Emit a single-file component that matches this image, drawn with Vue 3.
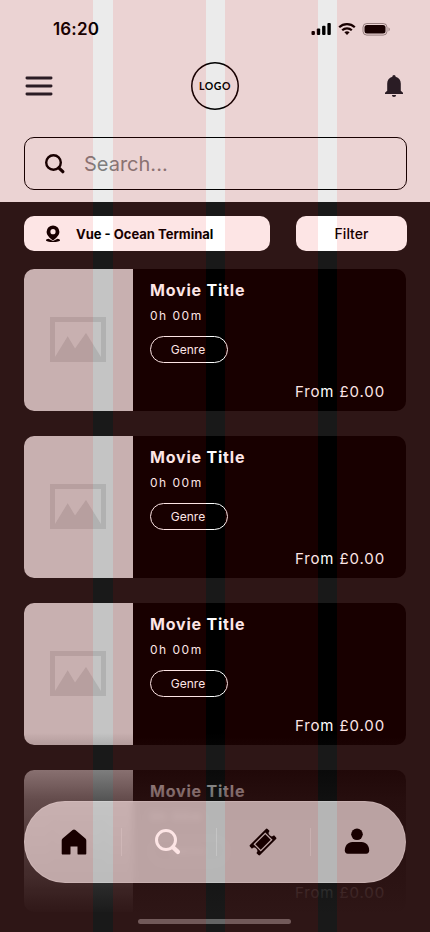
<script setup>
const movies = [1, 2, 3, 4]
</script>

<template>
  <div class="screen">
    <header class="top">
      <div class="status">
        <span class="time">16:20</span>
        <svg class="sys" width="80" height="16" viewBox="0 0 80 16">
          <g fill="#000">
            <rect x="0.5" y="9" width="3.4" height="4" rx="1" />
            <rect x="5.8" y="6.5" width="3.4" height="6.5" rx="1" />
            <rect x="11.1" y="3.7" width="3.4" height="9.3" rx="1" />
            <rect x="16.4" y="1" width="3.4" height="12" rx="1" />
          </g>
          <g fill="none" stroke="#000" stroke-width="2.2">
            <path d="M28.2 5.3a11.3 11.3 0 0 1 15.6 0" />
            <path d="M31.2 8.3a7 7 0 0 1 9.6 0" />
          </g>
          <path d="M33.4 10.3a4 4 0 0 1 5.2 0L36 13z" />
          <rect x="52" y="1.5" width="24" height="11.6" rx="3.8" fill="none" stroke="#000" stroke-opacity=".4" />
          <rect x="53.500" y="3" width="21" height="8.600" rx="2.500" />
          <path d="M77.500 5.300v4.200c1.800-.8 1.800-3.400 0-4.200z" fill-opacity=".4" />
        </svg>
      </div>
      <div class="bar">
        <svg width="28" height="20" viewBox="0 0 28 20" stroke="#152029" stroke-width="2.800" stroke-linecap="round">
          <path d="M1.900 2h24.200M1.900 10h24.200M1.900 18h24.200" />
        </svg>
        <div class="logo">LOGO</div>
        <svg class="bell" width="18" height="23" viewBox="0 0 18 23" fill="#152029">
          <path d="M9 0c1 0 1.600.7 1.600 1.800 3.400.8 5.200 3.500 5.200 6.800v7.200l2.200 2V19H0v-1.200l2.200-2V8.600c0-3.300 1.800-6 5.200-6.800C7.400.7 8 0 9 0zM6.900 20h4.200a2.100 2.100 0 0 1-4.200 0z" />
        </svg>
      </div>
      <div class="search">
        <svg width="20" height="20" viewBox="0 0 20 20" fill="none" stroke="#000">
          <circle cx="8.500" cy="8.500" r="7.300" stroke-width="2.400" />
          <path d="M13.800 13.800l4 3.900" stroke-width="3.200" stroke-linecap="round" />
        </svg>
        <span>Search...</span>
      </div>
    </header>
    <main>
      <div class="tools">
        <button class="place">
          <svg width="16" height="18" viewBox="0 0 16 18">
            <path d="M8 .5a6.400 6.400 0 0 0-6.400 6.300C1.600 10.300 4.400 12.700 8 15.500c3.600-2.800 6.400-5.200 6.400-8.700A6.400 6.400 0 0 0 8 .5zm0 3.600a2.600 2.600 0 1 1 0 5.200 2.600 2.600 0 0 1 0-5.200z" fill-rule="evenodd" />
            <path d="M3.600 13.800C2 14.100 1 14.600 1 15.200c0 1.100 3 1.800 7 1.800s7-.7 7-1.800c0-.6-1-1.100-2.600-1.400L8 16z" />
          </svg>
          <span>Vue - Ocean Terminal</span>
        </button>
        <button class="filter">Filter</button>
      </div>
      <section class="list">
        <article v-for="m in movies" :key="m" class="card">
          <div class="poster">
            <svg width="56" height="45" viewBox="0 0 56 45">
              <path d="M0 0h56v45H0zM5 5v35l12.700-20.800L25 31.500 36 16l15 24V5z" fill="#b1b1b1" fill-rule="evenodd" />
            </svg>
          </div>
          <div class="info">
            <h2>Movie Title</h2>
            <p class="length">0h 00m</p>
            <span class="genre">Genre</span>
            <p class="price">From £0.00</p>
          </div>
        </article>
      </section>
    </main>
    <div class="fade"></div>
    <nav>
      <a><svg width="26" height="27" viewBox="0 0 26 27"><path d="M13 .5c.5 0 .9.200 1.400.600l10 8.400c.7.600.9 1.200.9 2v13c0 .7-.4 1.100-1.100 1.100h-6.500c-.8 0-1.200-.4-1.200-1.200v-6.800h-7v6.800c0 .8-.4 1.200-1.200 1.200H1.800c-.7 0-1.100-.4-1.100-1.100v-13c0-.8.200-1.400.9-2l10-8.400c.5-.4.900-.600 1.400-.600z" /></svg></a>
      <i></i>
      <a class="find"><svg width="26" height="26" viewBox="0 0 26 26" fill="none" stroke="#fff"><circle cx="11" cy="11" r="9.500" stroke-width="3" /><path d="M18 18.200l4.900 4.700" stroke-width="4.300" stroke-linecap="round" /></svg></a>
      <i></i>
      <a><svg width="30" height="30" viewBox="-15 -15 30 30"><g transform="rotate(-45)"><path d="M-11.300-7.200h22.600q1.200 0 1.200 1.200v2.900a3.100 3.100 0 0 0 0 6.200v2.900q0 1.200-1.200 1.200h-22.600q-1.200 0-1.200-1.200v-2.900a3.100 3.100 0 0 0 0-6.200v-2.900q0-1.200 1.200-1.200z" /><path d="M-7.700-4.500h15.400v9h-15.400z" fill="none" stroke="#b9b9b9" stroke-width="1.300" /></g></svg></a>
      <i></i>
      <a><svg width="26" height="28" viewBox="0 0 26 28"><circle cx="13" cy="6.300" r="5.800" /><path d="M8.500 14h9c4.700 0 7.700 3.800 7.700 8.600 0 1.900-1 3.100-3 3.100H3.800c-2 0-3-1.200-3-3.100 0-4.800 3-8.600 7.700-8.600z" /></svg></a>
    </nav>
    <div class="home"></div>
    <div class="columns"><b></b><b></b><b></b><b></b></div>
  </div>
</template>

<style>
body { margin: 0; }
</style>
<style scoped>
* { box-sizing: border-box; }
.screen { position: relative; width: 430px; height: 932px; overflow: hidden; background: #191919; font-family: Inter, sans-serif; color: #000; }
.top { height: 202px; background: #ebebeb; padding: 0 24px; }
.status { height: 59px; padding: 20px 15px 0 29px; display: flex; justify-content: space-between; align-items: flex-start; }
.time { font-size: 17px; line-height: 19px; font-weight: 600; letter-spacing: 0.15px; }
.sys { margin-top: 2px; }
.bar { height: 54px; display: grid; grid-template-columns: 1fr 48px 1fr; align-items: center; padding: 0 3px 0 1px; }
.logo { margin-left: 1px; width: 48px; height: 48px; box-shadow: inset 0 0 0 1.5px #000; border-radius: 50%; display: flex; align-items: center; justify-content: center; font: 700 10.5px Lato, sans-serif; letter-spacing: 0.6px; }
.bell { justify-self: end; }
.search { margin-top: 24px; height: 53px; width: 383px; border: 1px solid #000; border-radius: 10px; display: flex; align-items: center; gap: 19px; padding-left: 20px; font-size: 20px; color: #7f7f7f; }
main { padding: 14px 24px 0; }
.tools { display: flex; justify-content: space-between; width: 383px; height: 35px; }
button { border: 0; padding: 0; background: #fff; border-radius: 10px; font-family: inherit; color: #000; }
.place { width: 246px; display: flex; align-items: center; padding-left: 21px; gap: 15px; font-size: 13px; font-weight: 700; }
.filter { width: 111px; font-size: 14px; font-weight: 500; }
.list { display: grid; gap: 25px; margin-top: 18px; }
.card { height: 142px; width: 382px; display: flex; overflow: hidden; border-radius: 10px; background: #000; color: #fff; }
.poster { width: 109px; background: #c4c4c4; display: flex; align-items: center; justify-content: center; padding: 0 1px 1px 0; }
.poster svg { margin: -1px 0 0 -1px; }
.info { flex: 1; padding: 11px 21px 0 17px; display: flex; flex-direction: column; align-items: flex-start; }
h2 { margin: 0; font-size: 16px; line-height: 20px; font-weight: 700; letter-spacing: 0.8px; }
p { margin: 0; }
.length { margin-top: 8px; font-size: 12px; line-height: 15px; letter-spacing: 1.5px; }
.genre { margin-top: 13px; width: 78px; height: 27px; border: 1px solid #fff; border-radius: 14px; display: flex; align-items: center; justify-content: center; font-size: 12px; padding-right: 2px; }
.price { align-self: flex-end; margin-top: 19px; font-size: 15px; line-height: 20px; letter-spacing: 0.88px; }
.fade { position: absolute; left: 0; right: 0; top: 733px; bottom: 0; background: linear-gradient(rgba(25,25,25,0), rgba(25,25,25,.41) 37px, rgba(25,25,25,.65) 67px, rgba(25,25,25,.87) 145px, #191919 182px); }
nav { position: absolute; left: 24px; top: 801px; width: 382px; height: 82px; border-radius: 41px; border: 1px solid rgba(255,255,255,.2); background: rgba(228,228,228,.78); backdrop-filter: blur(3px); display: flex; align-items: center; padding: 0 2px 0 3px; }
nav a { flex: 1 1 0; display: flex; justify-content: center; }
nav .find { padding-right: 2px; }
nav i { width: 1px; height: 28px; background: rgba(255,255,255,.2); }
.home { position: absolute; left: 138px; top: 919px; width: 153px; height: 5px; border-radius: 3px; background: #656565; }
.columns { position: absolute; inset: 0; display: grid; grid-template-columns: [a] 93px 20px [b] 93px 19px [c] 93px 19px [d] 93px; pointer-events: none; }
.columns b { background: rgba(240,4,0,.1); }
.columns b:nth-child(1) { grid-column: a; }
.columns b:nth-child(2) { grid-column: b; }
.columns b:nth-child(3) { grid-column: c; }
.columns b:nth-child(4) { grid-column: d; }
</style>
